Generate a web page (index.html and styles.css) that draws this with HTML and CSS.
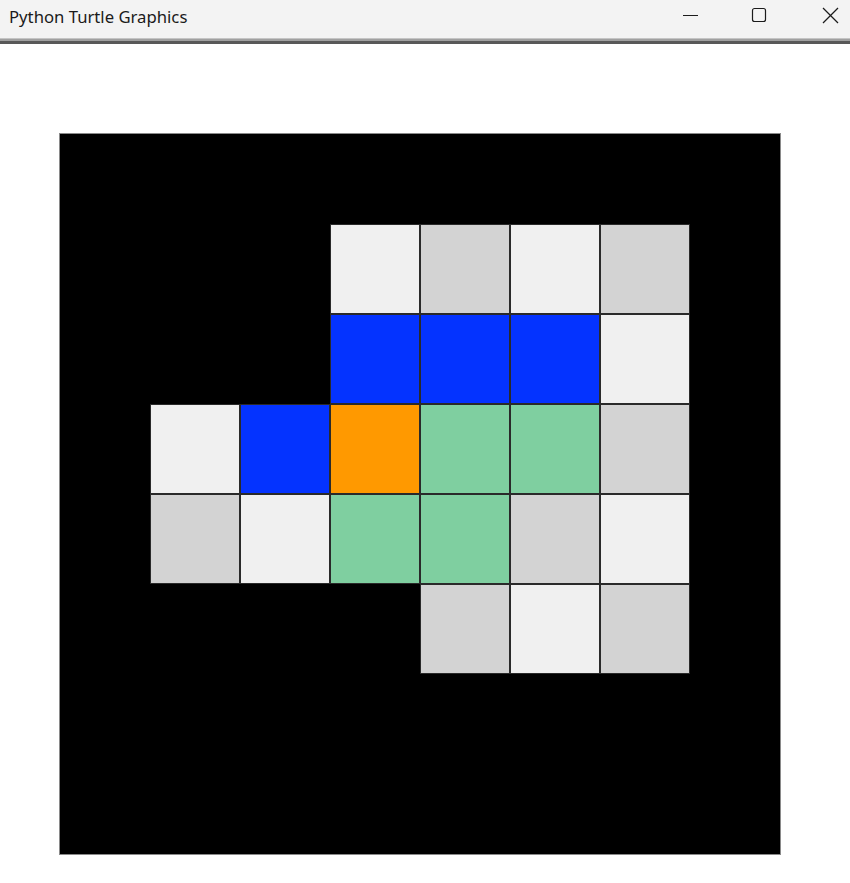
FILE: index.html
```html
<!DOCTYPE html>
<html>
<head>
<meta charset="utf-8">
<title>Python Turtle Graphics</title>
<link rel="stylesheet" href="styles.css">
</head>
<body>
<div class="window">
  <div class="titlebar">
    <span class="title">Python Turtle Graphics</span>
    <svg class="controls" width="170" height="38" viewBox="0 0 170 38">
      <line x1="3" y1="15.5" x2="18" y2="15.5" stroke="#1b1b1b" stroke-width="1"/>
      <rect x="72.5" y="8.5" width="13" height="13" rx="2" ry="2" fill="none" stroke="#1b1b1b" stroke-width="1.2"/>
      <line x1="143" y1="8" x2="158" y2="23" stroke="#1b1b1b" stroke-width="1.2"/>
      <line x1="158" y1="8" x2="143" y2="23" stroke="#1b1b1b" stroke-width="1.2"/>
    </svg>
  </div>
  <div class="sep"></div>
  <div class="canvas">
    <div class="board">
      <div class="c"></div><div class="c"></div><div class="c"></div><div class="c"></div><div class="c"></div><div class="c"></div><div class="c"></div><div class="c"></div>
      <div class="c"></div><div class="c"></div><div class="c"></div><div class="c light"></div><div class="c gray"></div><div class="c light"></div><div class="c gray"></div><div class="c"></div>
      <div class="c"></div><div class="c"></div><div class="c"></div><div class="c blue"></div><div class="c blue"></div><div class="c blue"></div><div class="c light"></div><div class="c"></div>
      <div class="c"></div><div class="c light"></div><div class="c blue"></div><div class="c orange"></div><div class="c green"></div><div class="c green"></div><div class="c gray"></div><div class="c"></div>
      <div class="c"></div><div class="c gray"></div><div class="c light"></div><div class="c green"></div><div class="c green"></div><div class="c gray"></div><div class="c light"></div><div class="c"></div>
      <div class="c"></div><div class="c"></div><div class="c"></div><div class="c"></div><div class="c gray"></div><div class="c light"></div><div class="c gray"></div><div class="c"></div>
      <div class="c"></div><div class="c"></div><div class="c"></div><div class="c"></div><div class="c"></div><div class="c"></div><div class="c"></div><div class="c"></div>
      <div class="c"></div><div class="c"></div><div class="c"></div><div class="c"></div><div class="c"></div><div class="c"></div><div class="c"></div><div class="c"></div>
    </div>
  </div>
</div>
</body>
</html>
```

FILE: styles.css
```css
html, body {
  margin: 0;
  padding: 0;
  background: #ffffff;
}
.window {
  width: 850px;
  height: 883px;
  overflow: hidden;
  background: #ffffff;
}
.titlebar {
  height: 38px;
  background: #f3f3f3;
  display: flex;
  align-items: center;
  justify-content: space-between;
}
.title {
  padding-left: 9px;
  padding-bottom: 6px;
  font-family: "Noto Sans", "Open Sans", sans-serif;
  font-size: 16.7px;
  color: #1a1a1a;
}
.controls {
  display: block;
  flex: none;
}
.sep {
  height: 2px;
  background: #a0a0a0;
  border-top: 1px solid #c4c4c4;
  border-bottom: 3px solid #585858;
}
.canvas {
  padding-top: 89px;
  padding-left: 59px;
}
.board {
  width: 720px;
  height: 720px;
  border: 1px solid #8a8a8a;
  background: #000000;
  display: grid;
  grid-template-columns: repeat(8, 90px);
  grid-template-rows: repeat(8, 90px);
}
.c {
  box-sizing: border-box;
}
.light, .gray, .blue, .orange, .green {
  border: 1px solid #2a2a2a;
}
.light { background: #f0f0f0; }
.gray { background: #d3d3d3; }
.blue { background: #0433ff; }
.orange { background: #ff9900; }
.green { background: #7fcfa0; }
```
